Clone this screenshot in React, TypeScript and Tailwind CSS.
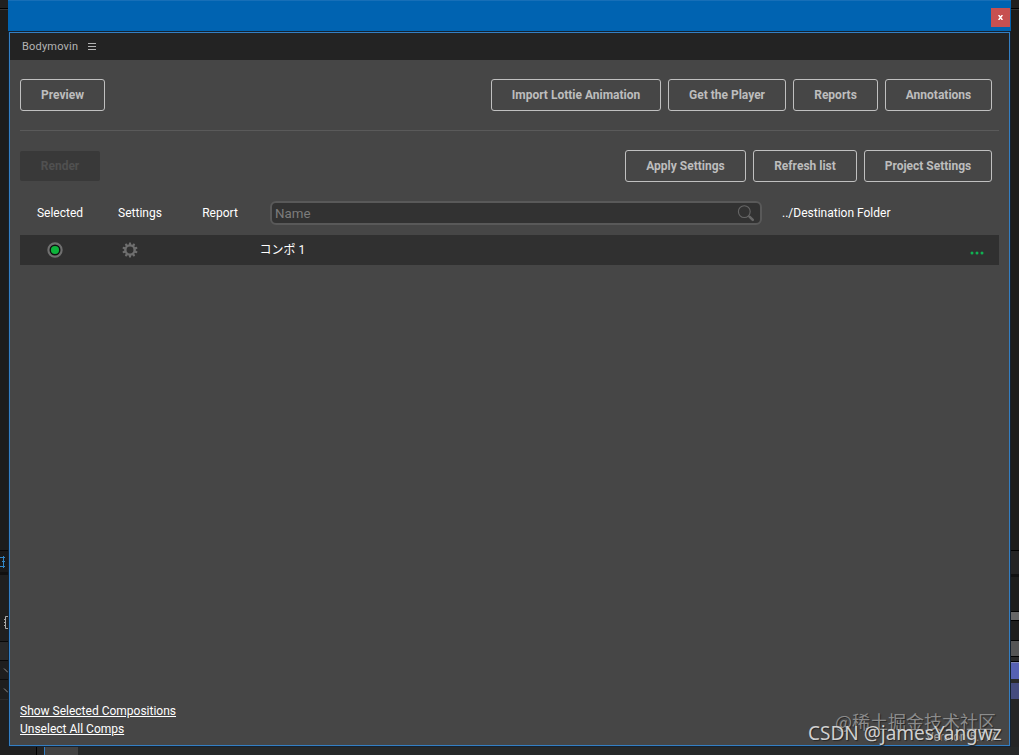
import type { ReactNode } from "react"

interface ButtonProps {
  label: string
  width: string
}

interface Strip {
  height: string
  color: string
  content?: ReactNode
}

function OutlineButton({ label, width }: ButtonProps) {
  return (
    <button
      className={`${width} h-8 shrink-0 rounded-[3px] border border-[#c0c0c0] text-center text-[12px] leading-none font-bold whitespace-nowrap text-[#bdbdbd]`}
    >
      {label}
    </button>
  )
}

function GearIcon() {
  const teeth = [0, 36, 72, 108, 144, 180, 216, 252, 288, 324]
  return (
    <svg width="16" height="16" viewBox="0 0 16 16" className="block">
      <circle cx="8" cy="8" r="4.6" fill="none" stroke="#6e6e6e" strokeWidth="2.3" />
      {teeth.map((angle) => (
        <path key={angle} d="M6.7 3 7.1.4h1.8L9.3 3z" fill="#6e6e6e" transform={`rotate(${angle} 8 8)`} />
      ))}
    </svg>
  )
}

function SearchIcon() {
  return (
    <svg width="18" height="18" viewBox="0 0 18 18" className="block" fill="none" stroke="#666666">
      <circle cx="7.3" cy="7.6" r="5.9" strokeWidth="1.1" />
      <path d="m11.5 11.8 1.2 1.1" strokeWidth="1.2" />
      <path d="m12.7 12.9 3.1 3" strokeWidth="2.6" strokeLinecap="round" />
    </svg>
  )
}

const leftStrips: Strip[] = [
  { height: "h-2", color: "bg-[#202020]" },
  { height: "h-px", color: "bg-black" },
  { height: "h-px", color: "bg-[#353535]" },
  { height: "h-[540px]", color: "bg-[#1c1c1c]" },
  { height: "h-px", color: "bg-[#080808]" },
  {
    height: "h-[21px]",
    color: "bg-[#191919]",
    content: (
      <svg width="8" height="21" viewBox="0 0 8 21" fill="none" stroke="#3288c9">
        <path d="M0 6.5h5M0 15.5h5M3.5 5v12M2 10.5h3" />
      </svg>
    ),
  },
  { height: "h-[3px]", color: "bg-[#101010]" },
  {
    height: "h-[66px]",
    color: "bg-[#1f1f1f]",
    content: (
      <svg width="8" height="66" viewBox="0 0 8 66" fill="none" stroke="#aaa">
        <path d="M8 41.5H5.5v12H8M4 44.5h2M4 47.5h2M4 50.5h2" />
      </svg>
    ),
  },
  { height: "h-px", color: "bg-[#080808]" },
  { height: "h-[18px]", color: "bg-[#292929]" },
  { height: "h-px", color: "bg-[#080808]" },
  {
    height: "h-[38px]",
    color: "bg-[#1e1e1e]",
    content: (
      <svg width="8" height="38" viewBox="0 0 8 38" fill="none">
        <path d="M0 18.5h8" stroke="#0c0c0c" />
        <path d="m4 7.5 4 4M4 27.5l4 4" stroke="#8b8b8b" />
      </svg>
    ),
  },
  { height: "h-px", color: "bg-[#2b2b2b]" },
  { height: "h-[47px]", color: "bg-[#202020]" },
]

const rightStrips: Strip[] = [
  { height: "h-2", color: "bg-[#202020]" },
  { height: "h-px", color: "bg-black" },
  { height: "h-px", color: "bg-[#353535]" },
  { height: "h-[540px]", color: "bg-[#1d1d1b]" },
  { height: "h-px", color: "bg-black" },
  { height: "h-[23px]", color: "bg-[#242424]" },
  { height: "h-[3px]", color: "bg-[#111111]" },
  { height: "h-[34px]", color: "bg-[#1d1d1c]" },
  { height: "h-px", color: "bg-black" },
  { height: "h-2", color: "bg-[#666666]" },
  { height: "h-px", color: "bg-black" },
  { height: "h-[19px]", color: "bg-[#1e1e1d]" },
  { height: "h-px", color: "bg-black" },
  { height: "h-[15px]", color: "bg-[#555555]" },
  { height: "h-px", color: "bg-black" },
  { height: "h-1", color: "bg-[#292929]" },
  { height: "h-px", color: "bg-black" },
  { height: "h-px", color: "bg-[#8186b4]" },
  { height: "h-4", color: "bg-[#5661b3]" },
  { height: "h-1", color: "bg-[#292929]" },
  { height: "h-4", color: "bg-[#454c7e]" },
  { height: "h-12", color: "bg-[#252525]" },
]

function EdgeStrips({ strips }: { strips: Strip[] }) {
  return (
    <div className="flex w-2 shrink-0 flex-col overflow-hidden">
      {strips.map((strip, index) => (
        <div key={index} className={`${strip.height} ${strip.color} shrink-0`}>
          {strip.content}
        </div>
      ))}
    </div>
  )
}

function Toolbar() {
  return (
    <>
      <div className="mt-[19px] flex justify-between pr-[7px]">
        <OutlineButton label="Preview" width="w-[85px]" />
        <div className="flex gap-[7px]">
          <OutlineButton label="Import Lottie Animation" width="w-[170px]" />
          <OutlineButton label="Get the Player" width="w-[118px]" />
          <OutlineButton label="Reports" width="w-[85px]" />
          <OutlineButton label="Annotations" width="w-[107px]" />
        </div>
      </div>
      <div className="mt-[19px] h-px shrink-0 bg-[#5a5a5a]" />
      <div className="mt-[19px] flex items-center justify-between pr-[7px]">
        <button className="h-[30px] w-20 rounded-[2px] bg-[#393939] text-[12px] leading-none font-bold text-[#505050]">
          Render
        </button>
        <div className="flex gap-[7px]">
          <OutlineButton label="Apply Settings" width="w-[121px]" />
          <OutlineButton label="Refresh list" width="w-[104px]" />
          <OutlineButton label="Project Settings" width="w-[128px]" />
        </div>
      </div>
    </>
  )
}

function CompositionList() {
  return (
    <>
      <div className="mt-[19px] flex h-6 items-center text-[12px] leading-6 text-white">
        <div className="w-20 text-center">Selected</div>
        <div className="w-20 text-center">Settings</div>
        <div className="w-20 text-center">Report</div>
        <div className="ml-[10px] flex h-6 w-[492px] items-center justify-between rounded-[6px] border-2 border-[#595959] bg-[#323232] pr-[5px] pl-[3px]">
          <span className="pt-px text-[13.33px] text-[#7c7c7c]">Name</span>
          <SearchIcon />
        </div>
        <div className="ml-5">../Destination Folder</div>
      </div>
      {/* Composition row */}
      <div className="mt-[10px] flex h-[30px] shrink-0 items-center bg-[#303030]">
        <div className="flex w-[70px] justify-center">
          <svg width="16" height="16" viewBox="0 0 16 16">
            <circle cx="8" cy="8" r="6.6" fill="#101010" stroke="#6f6f6f" strokeWidth="2.2" />
            <circle cx="8" cy="8" r="4.1" fill="#0db43b" />
          </svg>
        </div>
        <div className="flex w-20 justify-center">
          <GearIcon />
        </div>
        <div className="ml-[89.5px] font-['Roboto','Noto_Sans_CJK_JP',sans-serif] text-[12px] leading-none text-white">
          コンポ 1
        </div>
        <svg width="14" height="4" viewBox="0 0 14 4" className="mt-[5px] mr-[15px] ml-auto" fill="#10b253">
          <circle cx="2" cy="2" r="1.5" />
          <circle cx="7" cy="2" r="1.5" />
          <circle cx="12" cy="2" r="1.5" />
        </svg>
      </div>
    </>
  )
}

export default function App() {
  return (
    <div className="relative flex h-[755px] w-[1019px] flex-col overflow-hidden bg-[#252525] font-['Roboto',sans-serif]">
      <div className="flex h-[747px] shrink-0">
        <EdgeStrips strips={leftStrips} />
        <div className="flex w-[1003px] shrink-0 flex-col bg-[#142231]">
          <div className="flex h-[31px] shrink-0 items-start justify-end border-t border-[#176fb8] bg-[#0063b1] pt-[7px] pr-[1px]">
            <button className="flex h-[19px] w-[19px] items-center justify-center bg-[#c75050]">
              <svg width="5" height="5" viewBox="0 0 5 5" stroke="#ffffff" strokeWidth="1.4">
                <path d="m.6 0 3.8 5m0-5L.6 5" />
              </svg>
            </button>
          </div>
          <div className="mx-px mt-px flex h-[714px] flex-col border border-[#347fc3] bg-[#464646]">
            <div className="flex h-[27px] shrink-0 items-center bg-[#232323] pl-3">
              <span className="pt-0.5 text-[11px] tracking-[0.2px] text-[#b4b4b4]">Bodymovin</span>
              <svg width="8" height="7" viewBox="0 0 8 7" className="ml-[10px]" stroke="#b4b4b4">
                <path d="M0 .5h8M0 3.5h8M0 6.5h8" />
              </svg>
            </div>
            <div className="flex min-h-0 flex-1 flex-col px-[10px]">
              <Toolbar />
              <CompositionList />
              <div className="mt-auto mb-[7px] flex flex-col items-start text-[12px] leading-[18px] text-white">
                <span className="underline">Show Selected Compositions</span>
                <span className="underline">Unselect All Comps</span>
              </div>
            </div>
          </div>
        </div>
        <EdgeStrips strips={rightStrips} />
      </div>
      <div className="flex h-2 shrink-0 bg-[#262828]">
        <div className="w-9 bg-[#202020]" />
        <div className="w-px bg-black" />
        <div className="w-[7px] bg-[#242424]" />
        <div className="w-px bg-[#347fc3]" />
        <div className="w-[33px] bg-[#424242]" />
      </div>
      {/* Version label and watermarks overlap in the corner */}
      <span className="absolute top-[730px] left-[926px] text-[12px] leading-[14px] whitespace-nowrap text-[#a2a2a2]">Version 5.7.7</span>
      <span className="absolute top-[709px] left-[835px] font-['Noto_Sans_CJK_SC',sans-serif] text-[18px] leading-6 whitespace-nowrap text-[#8c8c8c] [text-shadow:1px_1px_1px_#252525]">
        @稀土掘金技术社区
      </span>
      <span className="absolute top-[721px] left-[808px] font-['Noto_Sans',sans-serif] text-[19px] leading-6 whitespace-nowrap text-[#d0d0d0] [text-shadow:1px_1px_1px_#252525]">
        CSDN @jamesYangwz
      </span>
    </div>
  )
}
